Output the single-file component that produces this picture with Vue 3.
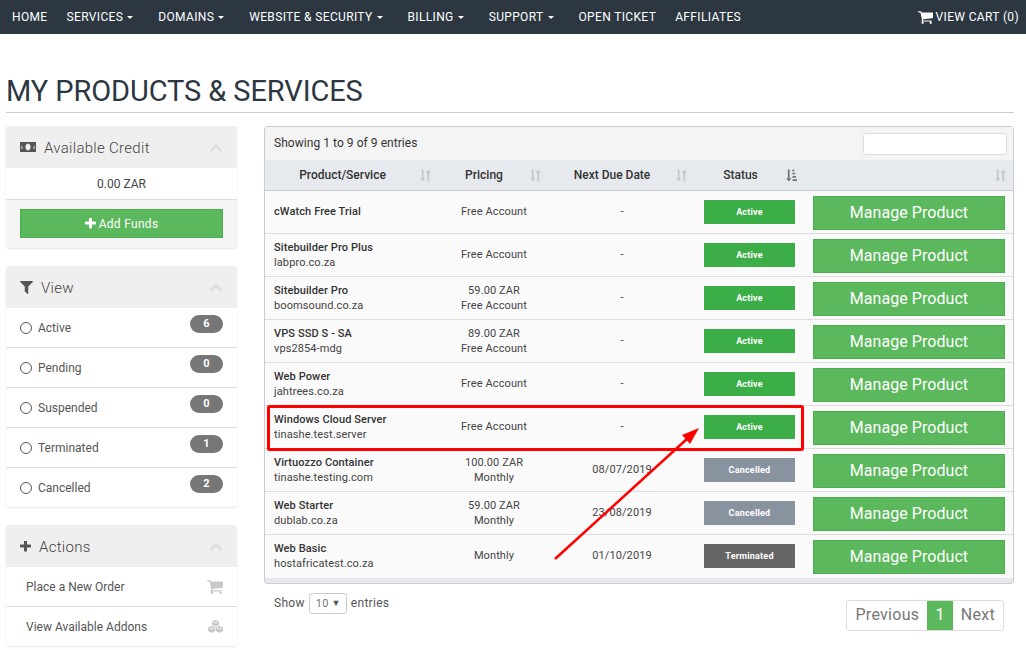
<template>
  <div class="page">
    <nav class="navbar">
      <ul class="nav-left">
        <li v-for="item in navItems" :key="item.label" :class="{ 'has-caret': item.caret }">
          {{ item.label }}<span v-if="item.caret" class="caret"></span>
        </li>
      </ul>
      <div class="nav-cart">
        <svg class="cart-icon" viewBox="64 128 1664 1536"><path :d="icons.cart" /></svg>
        VIEW CART (0)
      </div>
    </nav>

    <main class="main">
      <h1 class="page-title">MY PRODUCTS &amp; SERVICES</h1>

      <div class="columns">
        <aside class="sidebar">
          <!-- Available credit -->
          <section class="panel">
            <header class="panel-head">
              <svg class="head-icon money" viewBox="0 0 16 10">
                <path fill-rule="evenodd" d="M0 0h16v10H0zM1.500 3v4h1q.3-2-1-4zM14.500 3q-1.300 2-1 4h1zM8 1.500a2.500 3.500 0 1 0 .01 0z" />
              </svg>
              <span class="head-title">Available Credit</span>
              <svg class="chevron" viewBox="0 0 1792 1792"><path :d="icons.chevron" /></svg>
            </header>
            <div class="credit-value">0.00 ZAR</div>
            <div class="credit-foot">
              <button class="btn-funds">
                <svg class="funds-plus" viewBox="192 192 1408 1408"><path :d="icons.plus" /></svg>
                Add Funds
              </button>
            </div>
          </section>

          <!-- Status filter -->
          <section class="panel">
            <header class="panel-head">
              <svg class="head-icon filter" viewBox="190 256 1412 1408"><path :d="icons.filter" /></svg>
              <span class="head-title">View</span>
              <svg class="chevron" viewBox="0 0 1792 1792"><path :d="icons.chevron" /></svg>
            </header>
            <div v-for="item in filters" :key="item.label" class="side-row">
              <span class="radio"></span>
              <span class="side-label">{{ item.label }}</span>
              <span class="badge">{{ item.count }}</span>
            </div>
          </section>

          <!-- Actions -->
          <section class="panel">
            <header class="panel-head">
              <svg class="head-icon plus" viewBox="192 192 1408 1408"><path :d="icons.plus" /></svg>
              <span class="head-title">Actions</span>
              <svg class="chevron" viewBox="0 0 1792 1792"><path :d="icons.chevron" /></svg>
            </header>
            <div class="side-row action-row">
              <span class="side-label">Place a New Order</span>
              <svg class="action-cart" viewBox="64 128 1664 1536"><path :d="icons.cart" /></svg>
            </div>
            <div class="side-row action-row">
              <span class="side-label">View Available Addons</span>
              <svg class="action-cubes" viewBox="0 0 15 13">
                <path d="M7.500 0L11 1.300v3.800L7.500 6.400 4 5.100V1.300z" />
                <path d="M3.700 6L7.200 7.300v3.800L3.700 12.900 0 11.100V7.300z" />
                <path d="M11.300 6L15 7.300v3.800l-3.700 1.800-3.500-1.800V7.300z" />
                <path d="M5 2l2.500 1L10 2M1 8l2.700 1 2.500-1M8.800 8l2.500 1L14 8" fill="none" stroke="#fff" stroke-width=".8" />
              </svg>
            </div>
          </section>
        </aside>

        <section class="content">
          <div class="table-wrap">
            <div class="table-top">
              <span class="table-info">Showing 1 to 9 of 9 entries</span>
              <input class="search" type="text" />
            </div>
            <table class="services">
              <colgroup>
                <col class="col-product" />
                <col class="col-price" />
                <col class="col-due" />
                <col class="col-status" />
                <col />
              </colgroup>
              <thead>
                <tr>
                  <th v-for="(h, i) in headers" :key="i">
                    <span class="th-label">{{ h }}</span>
                    <svg class="sort" :class="{ active: h === 'Status' }" viewBox="0 0 12 13">
                      <template v-if="h === 'Status'">
                        <path d="M2 0h2v9.500h2L3 13 0 9.500h2z" />
                        <path d="M7 0h2v2H7zM7 3.500h3v2H7zM7 7h4v2H7zM7 10.500h5v2H7z" />
                      </template>
                      <template v-else>
                        <path d="M2 0h2v9.500h2L3 13 0 9.500h2z" />
                        <path d="M8 13h2V3.500h2L9 0 6 3.500h2z" />
                      </template>
                    </svg>
                  </th>
                </tr>
              </thead>
              <tbody>
                <tr v-for="row in rows" :key="row.name + row.domain">
                  <td class="cell-product" :class="{ 'cell-up': !row.domain }">
                    <strong>{{ row.name }}</strong>
                    <template v-if="row.domain"><br />{{ row.domain }}</template>
                  </td>
                  <td class="cell-center" :class="{ 'cell-up': row.price.length === 1 }">
                    <template v-for="(line, i) in row.price" :key="i">
                      <br v-if="i" />{{ line }}
                    </template>
                  </td>
                  <td class="cell-center cell-up">{{ row.due }}</td>
                  <td class="cell-center cell-status">
                    <span class="status" :class="row.status.toLowerCase()">{{ row.status }}</span>
                  </td>
                  <td class="cell-center cell-manage">
                    <a class="btn-manage">Manage Product</a>
                  </td>
                </tr>
              </tbody>
            </table>
          </div>

          <div class="table-foot">
            <div class="length">
              Show
              <span class="select">10<span class="select-arrow">▼</span></span>
              entries
            </div>
            <div class="pager">
              <span class="page-btn">Previous</span>
              <span class="page-btn current">1</span>
              <span class="page-btn">Next</span>
            </div>
          </div>
        </section>
      </div>
    </main>

    <!-- annotation drawn over the screenshot -->
    <svg class="annotation" width="1026" height="650" viewBox="0 0 1026 650">
      <rect x="268.500" y="406.500" width="534" height="43" rx="1" fill="none" stroke="#f00" stroke-width="3" />
      <line x1="555" y1="559" x2="688" y2="438" stroke="#f00" stroke-width="2.500" />
      <polygon points="699,428 690,444 682,435" fill="#f00" />
    </svg>
  </div>
</template>

<script setup>
const navItems = [
  { label: 'HOME' },
  { label: 'SERVICES', caret: true },
  { label: 'DOMAINS', caret: true },
  { label: 'WEBSITE & SECURITY', caret: true },
  { label: 'BILLING', caret: true },
  { label: 'SUPPORT', caret: true },
  { label: 'OPEN TICKET' },
  { label: 'AFFILIATES' },
];

const filters = [
  { label: 'Active', count: 6 },
  { label: 'Pending', count: 0 },
  { label: 'Suspended', count: 0 },
  { label: 'Terminated', count: 1 },
  { label: 'Cancelled', count: 2 },
];

const headers = ['Product/Service', 'Pricing', 'Next Due Date', 'Status', ''];

const rows = [
  { name: 'cWatch Free Trial', domain: '', price: ['Free Account'], due: '-', status: 'Active' },
  { name: 'Sitebuilder Pro Plus', domain: 'labpro.co.za', price: ['Free Account'], due: '-', status: 'Active' },
  { name: 'Sitebuilder Pro', domain: 'boomsound.co.za', price: ['59.00 ZAR', 'Free Account'], due: '-', status: 'Active' },
  { name: 'VPS SSD S - SA', domain: 'vps2854-mdg', price: ['89.00 ZAR', 'Free Account'], due: '-', status: 'Active' },
  { name: 'Web Power', domain: 'jahtrees.co.za', price: ['Free Account'], due: '-', status: 'Active' },
  { name: 'Windows Cloud Server', domain: 'tinashe.test.server', price: ['Free Account'], due: '-', status: 'Active' },
  { name: 'Virtuozzo Container', domain: 'tinashe.testing.com', price: ['100.00 ZAR', 'Monthly'], due: '08/07/2019', status: 'Cancelled' },
  { name: 'Web Starter', domain: 'dublab.co.za', price: ['59.00 ZAR', 'Monthly'], due: '23/08/2019', status: 'Cancelled' },
  { name: 'Web Basic', domain: 'hostafricatest.co.za', price: ['Monthly'], due: '01/10/2019', status: 'Terminated' },
];

const icons = {
  cart: 'M704 1536q0 52-38 90t-90 38-90-38-38-90 38-90 90-38 90 38 38 90zm896 0q0 52-38 90t-90 38-90-38-38-90 38-90 90-38 90 38 38 90zm128-1088v512q0 24-16.5 42.5t-40.5 21.5l-1044 122q13 60 13 70 0 16-24 64h920q26 0 45 19t19 45-19 45-45 19h-1024q-26 0-45-19t-19-45q0-11 8-31.5t16-36 21.5-40 15.5-29.5l-177-823h-204q-26 0-45-19t-19-45 19-45 45-19h256q16 0 28.5 6.5t19.5 15.5 13 24.5 8 26 5.5 29.5 4.5 26h1201q26 0 45 19t19 45z',
  filter: 'M1595 295q17 41-14 70l-493 493v742q0 42-39 59-13 5-25 5-27 0-45-19l-256-256q-19-19-19-45v-486l-493-493q-31-29-14-70 17-39 59-39h1280q42 0 59 39z',
  plus: 'M1600 736v192q0 40-28 68t-68 28h-416v416q0 40-28 68t-68 28h-192q-40 0-68-28t-28-68v-416h-416q-40 0-68-28t-28-68v-192q0-40 28-68t68-28h416v-416q0-40 28-68t68-28h192q40 0 68 28t28 68v416h416q40 0 68 28t28 68z',
  chevron: 'M1683 1331l-166 165q-19 19-45 19t-45-19l-531-531-531 531q-19 19-45 19t-45-19l-166-165q-19-19-19-45.5t19-45.5l742-741q19-19 45-19t45 19l742 741q19 19 19 45.5t-19 45.5z',
};
</script>

<style>
html,
body {
  margin: 0;
  background: #fff;
}
</style>

<style scoped>
.page {
  position: relative;
  width: 1026px;
  height: 650px;
  overflow: hidden;
  font-family: Roboto, "Liberation Sans", sans-serif;
  font-size: 12px;
  color: #333;
}

/* Top bar */
.navbar {
  display: flex;
  justify-content: space-between;
  align-items: center;
  height: 34px;
  padding: 0 7px 0 12px;
  background: #2c3742;
  color: #fff;
  font-size: 12px;
  letter-spacing: 0.35px;
}

.nav-left {
  display: flex;
  gap: 19px;
  margin: 0;
  padding: 0;
  list-style: none;
}

.has-caret {
  margin-right: 6px;
}

.caret {
  display: inline-block;
  margin-left: 4px;
  vertical-align: middle;
  border-top: 3px solid #fff;
  border-left: 3.5px solid transparent;
  border-right: 3.5px solid transparent;
}

.nav-cart {
  display: flex;
  align-items: center;
  gap: 3px;
}

.cart-icon {
  width: 15px;
  height: 14px;
  fill: #fff;
}

/* Heading */
.main {
  padding: 0 12px 0 6px;
}

.page-title {
  margin: 0 0 13px;
  padding: 41px 0 4px;
  border-bottom: 1px solid #ccc;
  font-size: 29px;
  font-weight: 400;
  line-height: 33px;
  letter-spacing: -0.1px;
  color: #2c3742;
}

.columns {
  display: grid;
  grid-template-columns: 231px 750px;
  column-gap: 27px;
  align-items: start;
}

/* Sidebar */
.panel {
  margin-bottom: 18px;
  border-radius: 3px;
  background: #fff;
  box-shadow: 0 1px 2px rgba(0, 0, 0, 0.1);
}

.panel-head {
  display: flex;
  align-items: center;
  height: 42px;
  padding: 0 14px;
  background: #efefef;
  border-radius: 3px 3px 0 0;
}

.head-icon {
  fill: #555;
}

.money {
  width: 16px;
  height: 10px;
  margin-right: 8px;
}

.filter {
  width: 13px;
  height: 13px;
  margin-right: 8px;
}

.plus {
  width: 11px;
  height: 11px;
  margin-right: 8px;
}

.head-title {
  flex: 1;
  padding-top: 2px;
  font-size: 15px;
  font-weight: 300;
  color: #444;
  letter-spacing: 0.3px;
}

.chevron {
  width: 14px;
  height: 14px;
  fill: #dedede;
}

.credit-value {
  height: 31px;
  line-height: 33px;
  text-align: center;
  color: #444;
  border-bottom: 1px solid #ddd;
}

.credit-foot {
  padding: 9px 14px 10px;
  background: #f5f5f5;
  border-radius: 0 0 3px 3px;
}

.btn-funds {
  display: flex;
  align-items: center;
  justify-content: center;
  gap: 3px;
  width: 100%;
  height: 29px;
  border: 1px solid #4cae4c;
  background: #5cb85c;
  color: #fff;
  font-family: inherit;
  font-size: 12px;
  letter-spacing: 0.3px;
}

.funds-plus {
  width: 11px;
  height: 11px;
  fill: #fff;
}

.side-row {
  position: relative;
  display: flex;
  align-items: center;
  height: 39px;
  padding: 0 14px;
  border-bottom: 1px solid #ddd;
  color: #555;
}

.side-row:last-child {
  border-bottom: 0;
}

.radio {
  width: 10px;
  height: 10px;
  margin-right: 6px;
  border: 1px solid #555;
  border-radius: 50%;
}

.side-label {
  flex: 1;
  padding-top: 1px;
}

.badge {
  width: 33px;
  height: 18px;
  margin-top: -8px;
  border-radius: 10px;
  background: #777;
  color: #fff;
  font-size: 11px;
  font-weight: 700;
  line-height: 18px;
  text-align: center;
}

.action-row {
  padding-left: 20px;
}

.action-cart {
  width: 16px;
  height: 15px;
  fill: #c9c9c9;
}

.action-cubes {
  width: 15px;
  height: 13px;
  fill: #c9c9c9;
}

/* Table */
.table-wrap {
  border: 1px solid #ccc;
  border-radius: 3px;
  background: #e6eaee;
  padding-bottom: 5px;
}

.table-top {
  display: flex;
  justify-content: space-between;
  align-items: center;
  height: 33px;
  padding: 0 6px 0 9px;
  background: #f4f4f4;
  letter-spacing: 0.05px;
}

.table-info {
  padding-bottom: 2px;
}

.search {
  box-sizing: border-box;
  width: 144px;
  height: 22px;
  border: 1px solid #ddd;
  border-radius: 3px;
  background: #fff;
  margin: 0;
}

.services {
  width: 100%;
  table-layout: fixed;
  border-collapse: collapse;
  background: #fafafa;
}

.col-product {
  width: 175px;
}

.col-price {
  width: 108px;
}

.col-due {
  width: 148px;
}

.col-status {
  width: 109px;
}

.services th {
  position: relative;
  height: 30px;
  padding: 0 20px 0 0;
  background: #e6eaee;
  border-bottom: 1px solid #ccc;
  font-weight: 500;
  color: #333;
  text-align: center;
}

.sort {
  position: absolute;
  right: 7px;
  top: 9px;
  width: 11px;
  height: 13px;
  fill: #c4c9cd;
}

.services th:nth-child(1) .sort,
.services th:nth-child(3) .sort {
  right: 9px;
}

.services th:nth-child(4) .sort {
  right: 8px;
}

.sort.active {
  fill: #777;
}

.services td {
  box-sizing: border-box;
  height: 43px;
  padding: 0;
  border-bottom: 1px solid #ddd;
  font-size: 11px;
  line-height: 15px;
  letter-spacing: 0.1px;
  color: #444;
}

.services tbody tr:last-child td {
  border-bottom: 0;
}

.services strong {
  font-weight: 500;
  color: #333;
}

.services .cell-product {
  padding-left: 9px;
}

.cell-center {
  text-align: center;
}

.services .cell-up {
  padding-bottom: 2px;
}

.services .cell-status {
  padding-right: 2px;
}

.services .cell-manage {
  padding-top: 2px;
}

.status {
  display: inline-block;
  width: 91px;
  height: 24px;
  line-height: 24px;
  font-size: 9px;
  font-weight: 700;
  letter-spacing: 0.2px;
  color: #fff;
  vertical-align: middle;
}

.status.active {
  background: #3bae48;
}

.status.cancelled {
  background: #8993a0;
}

.status.terminated {
  background: #666;
}

.btn-manage {
  display: inline-block;
  box-sizing: border-box;
  width: 192px;
  height: 34px;
  border: 1px solid #4cae4c;
  background: #5cb85c;
  color: #fff;
  font-size: 16px;
  line-height: 32px;
  letter-spacing: 0.05px;
  vertical-align: middle;
}

/* Footer of the table */
.table-foot {
  display: flex;
  justify-content: space-between;
  align-items: flex-start;
  padding: 9px 10px 0 10px;
  color: #555;
}

.length {
  display: flex;
  align-items: center;
  gap: 4px;
  letter-spacing: 0.3px;
}

.select {
  display: flex;
  justify-content: space-between;
  align-items: center;
  box-sizing: border-box;
  width: 38px;
  height: 21px;
  padding: 0 5px 0 6px;
  border: 1px solid #ccc;
  border-radius: 3px;
  font-size: 11px;
  color: #777;
}

.select-arrow {
  font-size: 9px;
  color: #555;
}

.pager {
  display: flex;
  margin-top: 7px;
  height: 31px;
  border: 1px solid #ddd;
  border-radius: 3px;
  box-sizing: border-box;
}

.page-btn {
  padding: 0 8px;
  font-size: 16px;
  line-height: 27px;
  color: #777;
  letter-spacing: 0.3px;
}

.page-btn.current {
  background: #5cb85c;
  color: #fff;
}

.annotation {
  position: absolute;
  left: 0;
  top: 0;
  pointer-events: none;
}
</style>
